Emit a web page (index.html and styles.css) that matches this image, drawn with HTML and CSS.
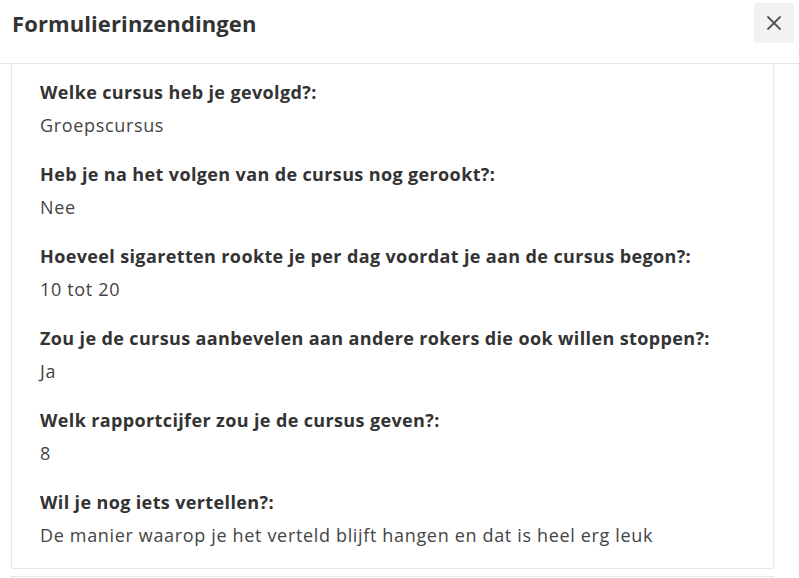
FILE: index.html
```html
<!DOCTYPE html>
<html lang="nl">
<head>
<meta charset="utf-8">
<title>Formulierinzendingen</title>
<link rel="stylesheet" href="styles.css">
</head>
<body>
<div class="modal">
  <header class="modal-header">
    <h1 class="modal-title">Formulierinzendingen</h1>
    <button class="close-btn" aria-label="Sluiten">
      <svg width="16" height="16" viewBox="0 0 16 16"><path d="M2 2 L14 14 M14 2 L2 14" stroke="#555" stroke-width="1.8" stroke-linecap="round" fill="none"/></svg>
    </button>
  </header>
  <div class="modal-body">
    <div class="card">
      <div class="entry">
        <div class="question">Welke cursus heb je gevolgd?:</div>
        <div class="answer">Groepscursus</div>
      </div>
      <div class="entry">
        <div class="question">Heb je na het volgen van de cursus nog gerookt?:</div>
        <div class="answer">Nee</div>
      </div>
      <div class="entry">
        <div class="question">Hoeveel sigaretten rookte je per dag voordat je aan de cursus begon?:</div>
        <div class="answer">10 tot 20</div>
      </div>
      <div class="entry">
        <div class="question">Zou je de cursus aanbevelen aan andere rokers die ook willen stoppen?:</div>
        <div class="answer">Ja</div>
      </div>
      <div class="entry">
        <div class="question">Welk rapportcijfer zou je de cursus geven?:</div>
        <div class="answer">8</div>
      </div>
      <div class="entry">
        <div class="question">Wil je nog iets vertellen?:</div>
        <div class="answer">De manier waarop je het verteld blijft hangen en dat is heel erg leuk</div>
      </div>
    </div>
    <div class="card card-next"></div>
  </div>
</div>
</body>
</html>
```

FILE: styles.css
```css
html, body {
  margin: 0;
  padding: 0;
  background: #fff;
  font-family: "Open Sans", Lato, Arial, sans-serif;
  color: #333;
  overflow: hidden;
}

.modal {
  width: 799px;
  height: 578px;
  overflow: hidden;
}

.modal-header {
  height: 64px;
  box-sizing: border-box;
  border-bottom: 1px solid #e6e6e6;
  display: flex;
  justify-content: space-between;
  align-items: flex-start;
  padding: 3px 5px 0 12px;
}

.modal-title {
  margin: 0;
  font-size: 22px;
  font-weight: 700;
  line-height: 40px;
  color: #333;
  letter-spacing: 0.1px;
}

.close-btn {
  width: 40px;
  height: 40px;
  border: none;
  border-radius: 3px;
  background: #f2f2f2;
  display: flex;
  align-items: center;
  justify-content: center;
  padding: 0;
}

.modal-body {
  padding: 0 25px 0 11px;
}

.card {
  border: 1px solid #e8e8e8;
  border-top: none;
  padding: 16px 28px 21px;
  display: flex;
  flex-direction: column;
  gap: 25px;
}

.card-next {
  margin-top: 7px;
  border-top: 1px solid #e8e8e8;
  height: 40px;
  padding: 0;
}

.entry {
  display: flex;
  flex-direction: column;
  gap: 9px;
}

.question {
  font-size: 18px;
  line-height: 24px;
  font-weight: 700;
  color: #333;
  letter-spacing: 0.37px;
}

.answer {
  font-size: 18px;
  line-height: 24px;
  color: #444;
  letter-spacing: 0.66px;
}
```
